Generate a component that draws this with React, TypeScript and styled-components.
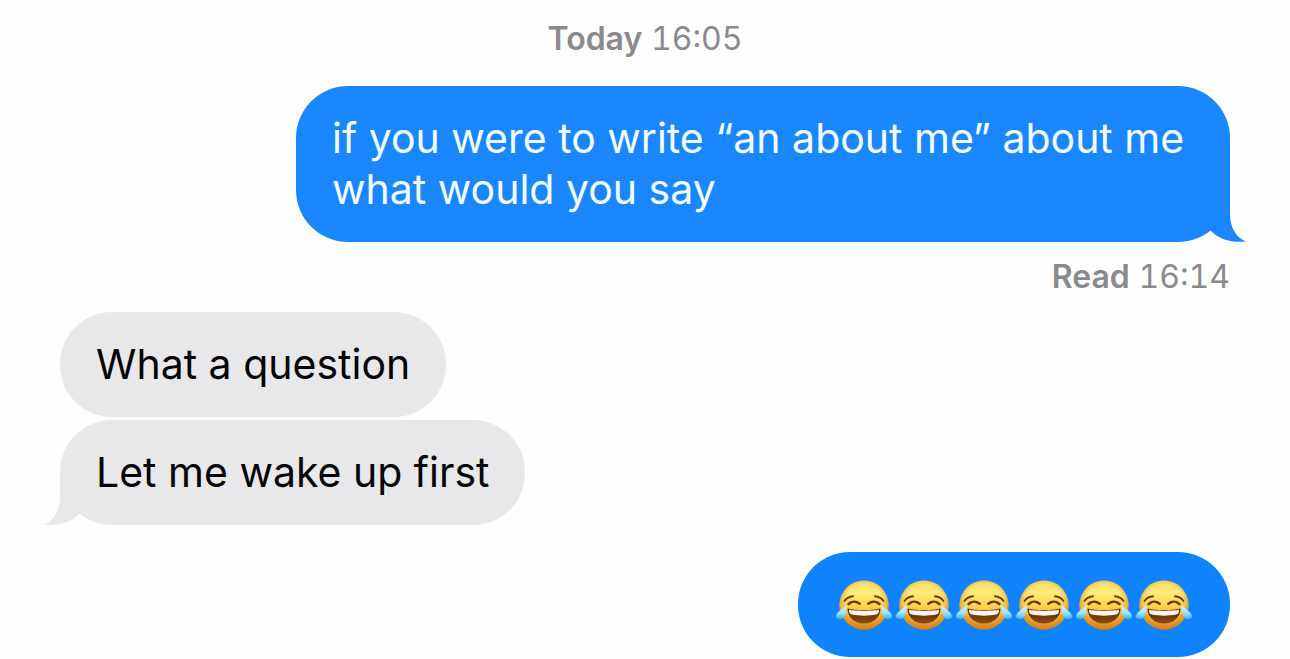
import React, { useId } from "react";
import styled, { createGlobalStyle, css } from "styled-components";

type Side = "sent" | "received";

const GlobalStyle = createGlobalStyle`
  *, *::before, *::after { box-sizing: border-box; }
  body {
    margin: 0;
    background: #fefefe;
    font-family: Inter, "Liberation Sans", sans-serif;
  }
`;

const Thread = styled.main`
  display: flex;
  flex-direction: column;
  padding: 19px 60px 2px;
`;

const Stamp = styled.p<{ $align: "center" | "right" }>`
  margin: 0;
  font-size: 32px;
  line-height: 40px;
  font-variant-numeric: tabular-nums;
  color: #8a8a8d;
  text-align: ${(p) => p.$align};
`;

const StampLabel = styled.span`
  font-weight: 600;
`;

const Group = styled.section<{ $side: Side; $gap: number }>`
  display: flex;
  flex-direction: column;
  gap: 3px;
  margin-top: ${(p) => p.$gap}px;
  align-items: ${(p) => (p.$side === "sent" ? "flex-end" : "flex-start")};
`;

const Receipt = styled.footer`
  margin-top: 15px;
`;

const bubbleTone = {
  sent: css`
    background: #1a87ff;
    color: #f2fcff;
  `,
  received: css`
    background: #e8e8ea;
    color: #050505;
  `,
};

const BubbleBox = styled.div<{ $side: Side; $color?: string }>`
  position: relative;
  max-width: min(100%, 934px);
  padding: 27px 36px;
  border-radius: 52px;
  font-size: 41px;
  line-height: 51px;
  ${(p) => bubbleTone[p.$side]}
  ${(p) => p.$color && `background: ${p.$color};`}
`;

const BubbleText = styled.p`
  margin: 0;
`;

const TailShape = styled.svg<{ $side: Side }>`
  position: absolute;
  bottom: 0;
  width: 50px;
  height: 52px;
  ${(p) =>
    p.$side === "sent"
      ? "right: -16px; fill: #1a87ff;"
      : "left: -16px; fill: #e8e8ea; transform: scaleX(-1);"}
`;

const EmojiRow = styled.div`
  display: flex;
`;

const EmojiArt = styled.svg`
  display: block;
  width: 60px;
  height: 51px;
`;

function Tail({ side }: { side: Side }) {
  return (
    <TailShape $side={side} viewBox="0 0 50 52" aria-hidden="true">
      <path d="M34 0V24C34 37 40 48 50 51.5C36 53 23 49.500 15 41L0 30V0Z" />
    </TailShape>
  );
}

function Bubble({
  side,
  tail,
  color,
  children,
}: {
  side: Side;
  tail?: boolean;
  color?: string;
  children: React.ReactNode;
}) {
  return (
    <BubbleBox $side={side} $color={color}>
      {tail && <Tail side={side} />}
      {children}
    </BubbleBox>
  );
}

function TearsOfJoy() {
  const id = useId();
  const face = `${id}face`;
  const rim = `${id}rim`;
  const tear = `${id}tear`;
  const mouth = `${id}mouth`;
  const mouthPath =
    "M13.500 29.500C18 30.600 24 31 30 31S42 30.600 46.500 29.500C46.500 38.500 39 44.500 30 44.500S13.500 38.500 13.500 29.500Z";
  return (
    <EmojiArt viewBox="0 0 60 51" role="img" aria-label="face with tears of joy">
      <defs>
        <linearGradient id={face} x1="0" y1="0" x2="0" y2="1">
          <stop offset="0" stopColor="#f9e06c" />
          <stop offset="0.25" stopColor="#ffec76" />
          <stop offset="0.6" stopColor="#fbcb44" />
          <stop offset="1" stopColor="#e58a1c" />
        </linearGradient>
        <radialGradient id={rim} cx="0.5" cy="0.46" r="0.54">
          <stop offset="0.72" stopColor="#d98a1e" stopOpacity="0" />
          <stop offset="1" stopColor="#c9781c" stopOpacity="0.7" />
        </radialGradient>
        <linearGradient id={tear} x1="0" y1="0" x2="0" y2="1">
          <stop offset="0" stopColor="#d3f4fb" />
          <stop offset="0.55" stopColor="#a2e3f8" />
          <stop offset="1" stopColor="#35b2f2" />
        </linearGradient>
        <linearGradient id={mouth} x1="0" y1="0" x2="0" y2="1">
          <stop offset="0" stopColor="#54280c" />
          <stop offset="1" stopColor="#8a4c12" />
        </linearGradient>
      </defs>
      <circle cx="30" cy="26" r="24.500" fill={`url(#${face})`} />
      <circle cx="30" cy="26" r="24.500" fill={`url(#${rim})`} />
      <g fill="none" stroke="#6b3c10" strokeLinecap="round">
        <path d="M10.500 22C12.500 19.300 15.500 17.600 19 17.300" strokeWidth="1.900" />
        <path d="M49.500 22C47.500 19.300 44.500 17.600 41 17.300" strokeWidth="1.900" />
        <path d="M14.600 25C17.500 22.100 22 21.900 25.600 24.700" strokeWidth="2.600" />
        <path d="M45.400 25C42.500 22.100 38 21.900 34.400 24.700" strokeWidth="2.600" />
      </g>
      <path d={mouthPath} fill={`url(#${mouth})`} />
      <path
        d="M15 30.800C20 32 40 32 45 30.800C45.200 34 44 35.200 42 35.600C35 37 25 37 18 35.600C16 35.200 14.800 34 15 30.800Z"
        fill="#fff4e6"
      />
      <path
        d="M12.600 26.300C7.500 30 2 34.500 2 37.300C2 40.700 8.200 41.200 10.500 37.500C12.300 34.500 13 30.500 12.600 26.300Z"
        fill={`url(#${tear})`}
      />
      <path
        d="M47.400 26.300C52.500 30 58 34.500 58 37.300C58 40.700 51.800 41.200 49.500 37.500C47.700 34.500 47 30.500 47.400 26.300Z"
        fill={`url(#${tear})`}
      />
    </EmojiArt>
  );
}

export default function App() {
  return (
    <>
      <GlobalStyle />
      <Thread>
        <Stamp $align="center">
          <StampLabel>Today</StampLabel> <time>16:05</time>
        </Stamp>

        <Group $side="sent" $gap={27}>
          <Bubble side="sent" tail>
            <BubbleText>
              if you were to write “an about me” about me what would you say
            </BubbleText>
          </Bubble>
        </Group>
        <Receipt>
          <Stamp $align="right">
            <StampLabel>Read</StampLabel> <time>16:14</time>
          </Stamp>
        </Receipt>

        <Group $side="received" $gap={15}>
          <Bubble side="received">
            <BubbleText>What a question</BubbleText>
          </Bubble>
          <Bubble side="received" tail>
            <BubbleText>Let me wake up first</BubbleText>
          </Bubble>
        </Group>

        <Group $side="sent" $gap={27}>
          <Bubble side="sent" color="#1083ff">
            <EmojiRow>
              {Array.from({ length: 6 }, (_, i) => (
                <TearsOfJoy key={i} />
              ))}
            </EmojiRow>
          </Bubble>
        </Group>
      </Thread>
    </>
  );
}
